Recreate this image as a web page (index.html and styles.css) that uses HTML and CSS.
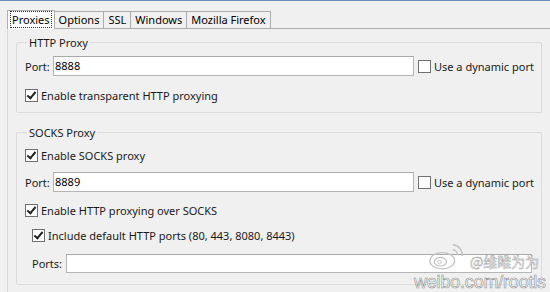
FILE: index.html
```html
<!DOCTYPE html>
<html>
<head>
<meta charset="utf-8">
<link rel="stylesheet" href="styles.css">
</head>
<body>
<div class="topline"></div>
<div class="tabs">
  <div class="tab active"><span class="focus">Proxies</span></div>
  <div class="tab">Options</div>
  <div class="tab">SSL</div>
  <div class="tab">Windows</div>
  <div class="tab">Mozilla Firefox</div>
</div>
<div class="panel">
  <fieldset class="group http">
    <legend>HTTP Proxy</legend>
    <div class="row port-row">
      <span class="label">Port:</span>
      <div class="input">8888</div>
      <span class="box"></span><span class="cbtext">Use a dynamic port</span>
    </div>
    <div class="row check-row">
      <span class="box checked"></span><span class="cbtext">Enable transparent HTTP proxying</span>
    </div>
  </fieldset>
  <fieldset class="group socks">
    <legend>SOCKS Proxy</legend>
    <div class="row check-row first">
      <span class="box checked"></span><span class="cbtext">Enable SOCKS proxy</span>
    </div>
    <div class="row port-row">
      <span class="label">Port:</span>
      <div class="input">8889</div>
      <span class="box"></span><span class="cbtext">Use a dynamic port</span>
    </div>
    <div class="row check-row">
      <span class="box checked"></span><span class="cbtext">Enable HTTP proxying over SOCKS</span>
    </div>
    <div class="row check-row indent">
      <span class="box checked"></span><span class="cbtext">Include default HTTP ports (80, 443, 8080, 8443)</span>
    </div>
    <div class="row ports-row indent">
      <span class="label">Ports:</span>
      <div class="input wide"></div>
    </div>
  </fieldset>
</div>
<div class="watermark">
  <div class="wm-top">
    <svg class="wm-logo" width="38" height="30" viewBox="0 0 40 30">
      <ellipse cx="15" cy="20" rx="13" ry="8.5" fill="none" stroke="#c4c4c4" stroke-width="1.4"/>
      <ellipse cx="13" cy="21" rx="6.5" ry="4.5" fill="none" stroke="#c4c4c4" stroke-width="1.2"/>
      <circle cx="12" cy="21.5" r="1.8" fill="none" stroke="#c4c4c4" stroke-width="1"/>
      <path d="M26 3 A11 11 0 0 1 36 15" fill="none" stroke="#c4c4c4" stroke-width="1.8"/>
      <path d="M26 8.5 A5.5 5.5 0 0 1 31 14" fill="none" stroke="#c4c4c4" stroke-width="1.5"/>
    </svg>
    <span class="wm-name">@维睢为为</span>
  </div>
  <div class="wm-url">weibo.com/rootls</div>
</div>
</body>
</html>
```
FILE: styles.css
```css
html, body {
  margin: 0;
  padding: 0;
}
body {
  width: 550px;
  height: 292px;
  background: #f0f0f0;
  font-family: "Noto Sans", "Liberation Sans", sans-serif;
  font-size: 11px;
  color: #000;
  position: relative;
  overflow: hidden;
}
.topline {
  height: 1px;
  background: #6b8fb8;
}
.tabs {
  display: flex;
  align-items: flex-end;
  padding: 8px 0 0 7px;
  height: 19px;
}
.tab {
  height: 17px;
  line-height: 16px;
  padding: 0 4px 0 4px;
  border: 1px solid #adadad;
  border-bottom: none;
  border-left: none;
  background: #f0f0f0;
  box-sizing: border-box;
  white-space: nowrap;
}
.tab.active {
  height: 19px;
  border-left: 1px solid #adadad;
  padding: 0 3px;
  line-height: 18px;
  background: #fff;
  position: relative;
  z-index: 1;
  margin-bottom: -1px;
}
.tab.active .focus {
  outline: 1px dotted #333;
  padding: 0 1px;
}
.panel {
  margin-left: 7px;
  border-top: 1px solid #adadad;
  border-left: 1px solid #d9d9d9;
  height: 270px;
  padding: 6px 0 0 8px;
  box-sizing: border-box;
}
.group {
  margin: 0;
  width: 526px;
  box-sizing: border-box;
  border: 1px solid #dcdcdc;
  border-radius: 2px;
  padding: 0 0 0 8px;
}
.group legend {
  padding: 0 2px;
  margin-left: 2px;
  color: #1a1a1a;
}
.http {
  height: 78px;
}
.socks {
  margin-top: 12px;
  height: 160px;
}
.row {
  display: flex;
  align-items: center;
  white-space: nowrap;
}
.port-row {
  height: 20px;
  margin-top: 6px;
}
.check-row {
  height: 14px;
  margin-top: 12px;
}
.socks .check-row {
  margin-top: 11px;
}
.socks .check-row.first {
  margin-top: 8px;
}
.socks .port-row {
  margin-top: 10px;
}
.label {
  width: 28px;
  color: #1a1a1a;
}
.input {
  width: 361px;
  height: 20px;
  box-sizing: border-box;
  border: 1px solid #b5b5b5;
  border-top-color: #a9a9a9;
  background: #fff;
  line-height: 18px;
  padding-left: 1px;
  margin-right: 4px;
}
.box {
  width: 13px;
  height: 13px;
  box-sizing: border-box;
  border: 1px solid #707070;
  background: #fff;
  position: relative;
  flex: none;
}
.box.checked::after {
  content: "";
  position: absolute;
  left: 3px;
  top: 0px;
  width: 3px;
  height: 7px;
  border: solid #222;
  border-width: 0 2px 2px 0;
  transform: rotate(40deg);
}
.cbtext {
  margin-left: 3px;
  color: #1a1a1a;
}
.indent {
  padding-left: 7px;
}
.ports-row {
  margin-top: 12px;
  height: 19px;
}
.ports-row .label {
  width: 34px;
}
.input.wide {
  width: 466px;
  height: 19px;
}
.watermark {
  position: absolute;
  left: 414px;
  top: 241px;
  color: #d0d0d0;
  pointer-events: none;
  white-space: nowrap;
}
.wm-top {
  display: flex;
  align-items: flex-end;
  height: 30px;
  padding-left: 14px;
}
.wm-logo {
  margin-right: 4px;
}
.wm-name {
  font-family: "Noto Sans CJK SC", sans-serif;
  font-size: 14px;
  line-height: 15px;
  margin-bottom: 2px;
  color: #fff;
  -webkit-text-stroke: 0.5px #a0a0a0;
}
.wm-url {
  margin-top: 3px;
  font-family: "Liberation Sans", sans-serif;
  font-size: 18px;
  line-height: 17px;
  color: #fff;
  -webkit-text-stroke: 0.6px #909090;
  letter-spacing: -0.2px;
}
```
